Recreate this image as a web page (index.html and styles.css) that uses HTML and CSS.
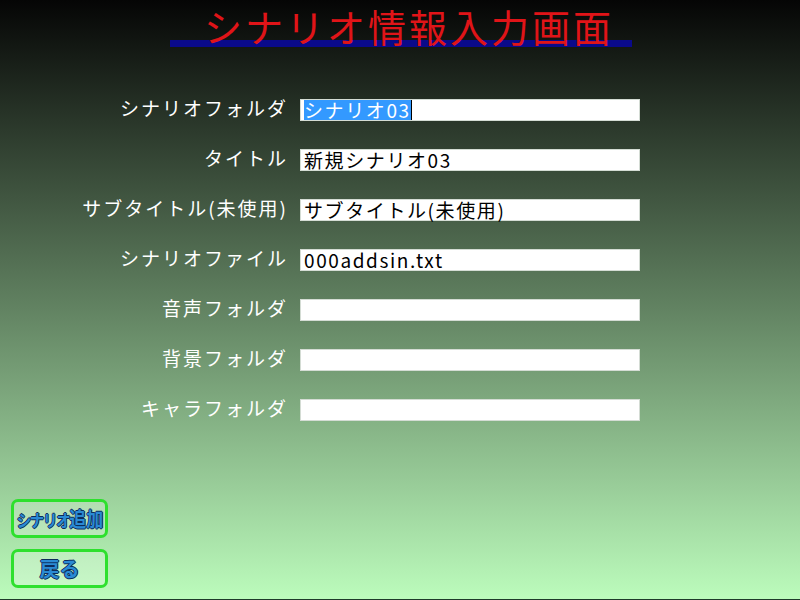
FILE: index.html
```html
<!DOCTYPE html>
<html lang="ja">
<head>
<meta charset="utf-8">
<title>シナリオ情報入力画面</title>
<link rel="stylesheet" href="styles.css">
</head>
<body>
<div class="screen">
  <header class="title-wrap">
    <h1 class="title">シナリオ情報入力画面</h1>
  </header>
  <main class="form">
    <div class="label">シナリオフォルダ</div>
    <div class="field"><span class="sel">シナリオ03</span><span class="caret"></span></div>
    <div class="label">タイトル</div>
    <div class="field">新規シナリオ03</div>
    <div class="label">サブタイトル(未使用)</div>
    <div class="field">サブタイトル(未使用)</div>
    <div class="label">シナリオファイル</div>
    <div class="field">000addsin.txt</div>
    <div class="label">音声フォルダ</div>
    <div class="field"></div>
    <div class="label">背景フォルダ</div>
    <div class="field"></div>
    <div class="label">キャラフォルダ</div>
    <div class="field"></div>
  </main>
  <footer class="buttons">
    <div class="btn"><span class="btn-text narrow">シナリオ<span class="kanji">追加</span></span></div>
    <div class="btn"><span class="btn-text">戻る</span></div>
  </footer>
</div>
</body>
</html>
```
FILE: styles.css
```css
html, body {
  margin: 0;
  padding: 0;
}
body {
  width: 800px;
  height: 600px;
  overflow: hidden;
  font-family: "Noto Sans CJK JP", "Noto Sans", sans-serif;
}
.screen {
  width: 800px;
  height: 599px;
  border-bottom: 1px solid #1e3a2a;
  background: linear-gradient(to bottom, #050505 0%, #5f7f5f 50%, #bcfcbc 100%);
  display: flex;
  flex-direction: column;
}
.title-wrap {
  margin-left: 170px;
  width: 462px;
  height: 47px;
  background: linear-gradient(#0a0a8a, #0a0a8a) bottom / 100% 7px no-repeat;
}
.title {
  margin: 0;
  padding: 10px 0 0 34px;
  font-family: "Liberation Serif", "Noto Sans CJK JP", serif;
  font-weight: normal;
  font-size: 38px;
  line-height: 38px;
  letter-spacing: 3px;
  color: #e01418;
  white-space: nowrap;
}
.form {
  margin-top: 52px;
  display: grid;
  grid-template-columns: 288px 340px;
  column-gap: 12px;
  row-gap: 28px;
  align-items: center;
}
.label {
  text-align: right;
  color: #ffffff;
  font-size: 19px;
  line-height: 22px;
  letter-spacing: 2px;
  white-space: nowrap;
  padding-bottom: 2px;
  margin-top: -2px;
}
.field {
  height: 22px;
  box-sizing: border-box;
  background: #ffffff;
  border: 1px solid #d4dcd4;
  padding-left: 3px;
  font-size: 19px;
  line-height: 20px;
  letter-spacing: 1.6px;
  color: #000000;
  white-space: nowrap;
  display: flex;
  align-items: center;
}
.sel {
  background: #3399ff;
  color: #ffffff;
}
.caret {
  width: 1px;
  height: 20px;
  background: #000;
}
.buttons {
  margin-top: auto;
  padding: 0 0 11px 11px;
  display: flex;
  flex-direction: column;
  gap: 11px;
}
.btn {
  width: 97px;
  height: 39px;
  box-sizing: border-box;
  border: 3px solid #2ee02e;
  border-radius: 7px;
  background: rgba(255, 255, 255, 0.22);
  display: flex;
  align-items: center;
  justify-content: center;
}
.btn-text {
  font-size: 20px;
  font-weight: bold;
  color: #2a8ad4;
  white-space: nowrap;
  text-shadow: 1px 0 0 #0c2c5a, -1px 0 0 #0c2c5a, 0 1px 0 #0c2c5a, 0 -1px 0 #0c2c5a;
}
.narrow {
  display: inline-block;
  font-size: 17px;
  letter-spacing: -1.5px;
  transform: scaleX(0.85);
}
.kanji {
  font-size: 20px;
  letter-spacing: 0;
}
```
